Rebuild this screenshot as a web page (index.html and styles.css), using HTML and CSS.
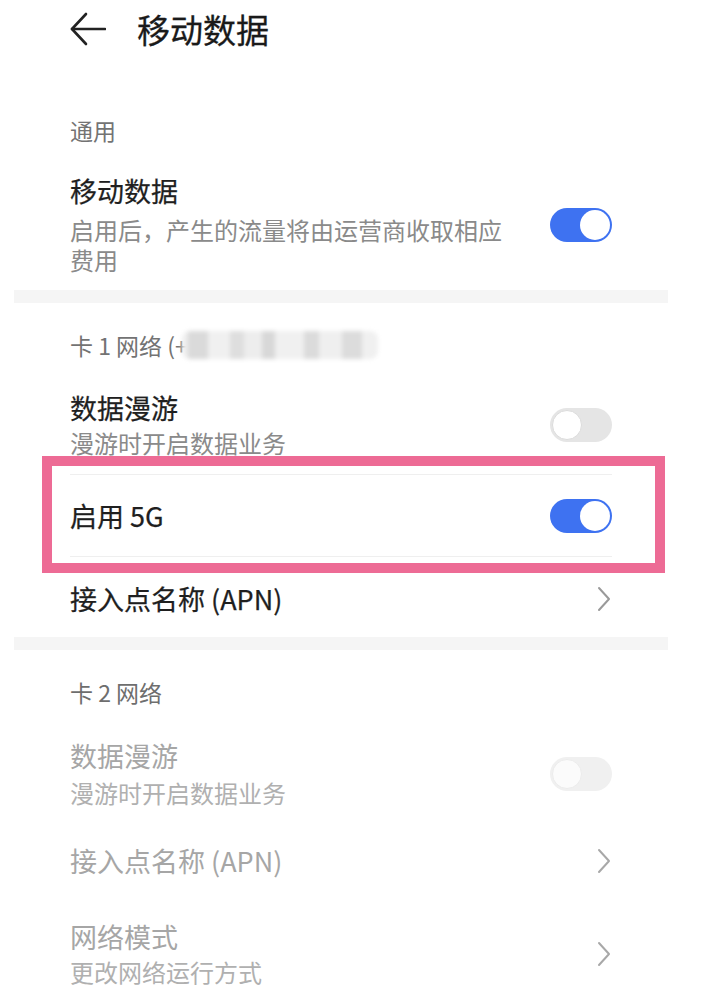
FILE: index.html
```html
<!DOCTYPE html>
<html lang="zh-CN">
<head>
<meta charset="utf-8">
<title>移动数据</title>
<link rel="stylesheet" href="styles.css">
</head>
<body>
<div class="page">
  <header class="appbar">
    <svg class="back" width="36" height="34" viewBox="0 0 36 34">
      <polyline points="16,2 2,17 16,32" fill="none" stroke="#222" stroke-width="2.6" stroke-linecap="round" stroke-linejoin="round"/>
      <line x1="2" y1="17" x2="35" y2="17" stroke="#222" stroke-width="2.6" stroke-linecap="round"/>
    </svg>
    <h1 class="title">移动数据</h1>
  </header>

  <section class="sec sec1">
    <div class="group-title">通用</div>
    <div class="row row-main">
      <div class="row-text wide">
        <div class="t">移动数据</div>
        <div class="s">启用后，产生的流量将由运营商收取相应费用</div>
      </div>
      <div class="switch on"><span class="knob"></span></div>
    </div>
  </section>

  <div class="band"></div>

  <section class="sec sec2">
    <div class="group-title">卡 1 网络 (+<span class="masked"></span></div>
    <div class="row row-roam bordered">
      <div class="row-text">
        <div class="t">数据漫游</div>
        <div class="s">漫游时开启数据业务</div>
      </div>
      <div class="switch off"><span class="knob"></span></div>
    </div>
    <div class="hl-wrap">
      <div class="row row-5g bordered">
        <div class="t">启用 5G</div>
        <div class="switch on"><span class="knob"></span></div>
      </div>
      <div class="highlight"></div>
    </div>
    <div class="row row-apn">
      <div class="t">接入点名称 (APN)</div>
      <svg class="chev" width="14" height="26" viewBox="0 0 14 26"><polyline points="2,2 12,13 2,24" fill="none" stroke="#9a9a9a" stroke-width="2" stroke-linecap="round" stroke-linejoin="round"/></svg>
    </div>
  </section>

  <div class="band"></div>

  <section class="sec sec3 disabled">
    <div class="group-title">卡 2 网络</div>
    <div class="row row-roam2">
      <div class="row-text">
        <div class="t">数据漫游</div>
        <div class="s">漫游时开启数据业务</div>
      </div>
      <div class="switch off dis"><span class="knob"></span></div>
    </div>
    <div class="row row-apn2">
      <div class="t">接入点名称 (APN)</div>
      <svg class="chev" width="14" height="26" viewBox="0 0 14 26"><polyline points="2,2 12,13 2,24" fill="none" stroke="#a8a8a8" stroke-width="2" stroke-linecap="round" stroke-linejoin="round"/></svg>
    </div>
    <div class="row row-mode">
      <div class="row-text">
        <div class="t">网络模式</div>
        <div class="s">更改网络运行方式</div>
      </div>
      <svg class="chev" width="14" height="26" viewBox="0 0 14 26"><polyline points="2,2 12,13 2,24" fill="none" stroke="#a8a8a8" stroke-width="2" stroke-linecap="round" stroke-linejoin="round"/></svg>
    </div>
  </section>
</div>
</body>
</html>
```
FILE: styles.css
```css
html, body {
  margin: 0;
  padding: 0;
  background: #ffffff;
}
body {
  font-family: "Noto Sans CJK SC", "Noto Sans", sans-serif;
  overflow: hidden;
}
.page {
  width: 654px;
  margin-left: 14px;
}
.appbar {
  height: 58px;
  display: flex;
  align-items: center;
  padding-left: 56px;
  gap: 31px;
}
.back {
  flex-shrink: 0;
}
.title {
  margin: 0;
  font-size: 33px;
  font-weight: 400;
  color: #1a1a1a;
  line-height: 40px;
  -webkit-text-stroke: 0.3px #1a1a1a;
}
.sec1 { padding-top: 44px; }
.sec2 { padding-top: 14px; }
.sec3 { padding-top: 14px; }
.band {
  height: 13px;
  background: #f5f5f5;
}
.group-title {
  height: 56px;
  margin: 0 56px;
  display: flex;
  align-items: center;
  font-size: 23px;
  color: #737373;
}
.masked {
  display: inline-block;
  width: 196px;
  height: 28px;
  margin-left: -6px;
  border-radius: 8px;
  background: linear-gradient(90deg,
    #eeeeee 0 6px, #dadada 6px 26px, #f0f0f0 26px 48px, #dedede 48px 62px,
    #ededed 62px 80px, #d8d8d8 80px 93px, #f0f0f0 93px 122px, #dbdbdb 122px 137px,
    #efefef 137px 160px, #dcdcdc 160px 180px, #f0f0f0 180px 196px);
  filter: blur(2px);
}
.row {
  margin: 0 56px;
  display: flex;
  align-items: center;
  justify-content: space-between;
  gap: 30px;
  box-sizing: border-box;
}
.bordered {
  border-bottom: 1px solid #efefef;
}
.row-text {
  display: flex;
  flex-direction: column;
}
.row-text.wide {
  width: 445px;
}
.t {
  font-size: 27px;
  line-height: 34px;
  font-weight: 400;
  color: #1f1f1f;
  -webkit-text-stroke: 0.25px #1f1f1f;
}
.s {
  font-size: 24px;
  line-height: 30px;
  color: #8a8a8a;
}
.row-main { padding: 16px 0 15px; }
.row-main .row-text { gap: 7px; }
.row-roam { padding: 18px 0 16px; }
.row-roam .row-text { gap: 3px; }
.row-5g { height: 82px; }
.row-apn { height: 80px; padding-top: 4px; }
.row-roam2 { padding: 19px 0 14px; }
.row-roam2 .row-text { gap: 5px; }
.row-apn2 { height: 78px; }
.row-mode { padding: 20px 0 20px; }
.row-mode .row-text { gap: 3px; }

.disabled .t { color: #a6a6a6; -webkit-text-stroke: 0; }
.disabled .s { color: #b0b0b0; }
.disabled .group-title { color: #6e6e6e; }

.hl-wrap {
  position: relative;
}
.highlight {
  position: absolute;
  left: 28px;
  top: -19px;
  width: 623px;
  height: 117px;
  box-sizing: border-box;
  border: 10px solid #ed6b95;
  pointer-events: none;
}
.chev { flex-shrink: 0; margin-right: 1px; }

.switch {
  flex-shrink: 0;
  width: 62px;
  height: 34px;
  box-sizing: border-box;
  border-radius: 17px;
  padding: 2px;
  display: flex;
  align-items: center;
}
.knob {
  width: 30px;
  height: 30px;
  border-radius: 50%;
  background: #ffffff;
  box-sizing: border-box;
}
.switch.on {
  background: #3e72f1;
  justify-content: flex-end;
}
.switch.off {
  background: #e5e5e5;
  justify-content: flex-start;
}
.switch.off .knob {
  border: 1px solid #dcdcdc;
}
.switch.off.dis {
  background: #f0f0f0;
}
.switch.off.dis .knob {
  background: #fbfbfb;
  border-color: #ececec;
}
```
